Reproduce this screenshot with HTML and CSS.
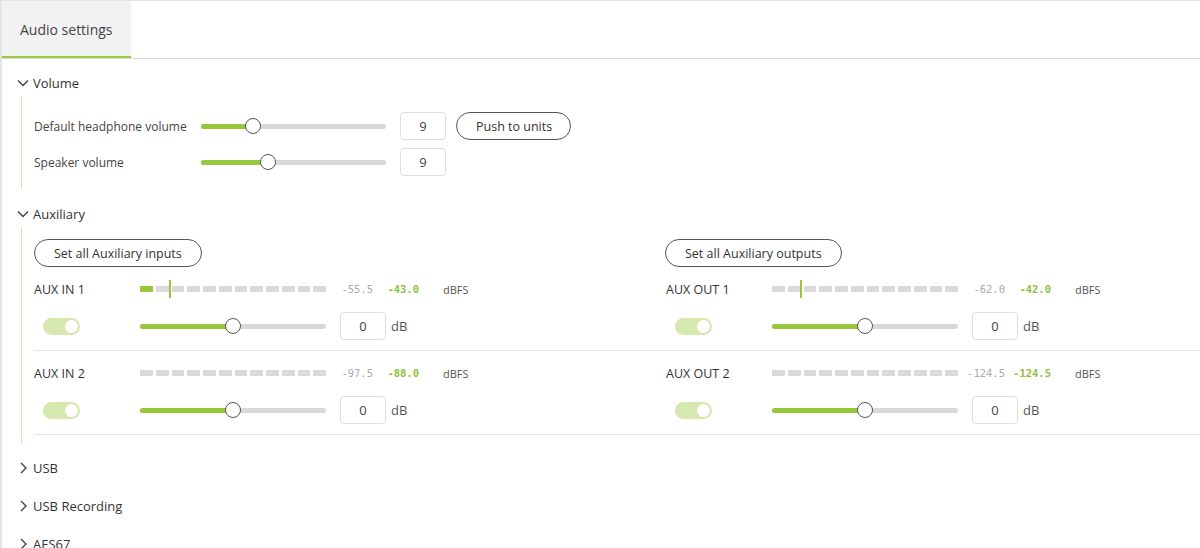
FILE: index.html
```html
<!DOCTYPE html>
<html lang="en">
<head>
    <meta charset="UTF-8">
    <meta name="viewport" content="width=device-width, initial-scale=1.0">
    <title>Audio settings</title>
    <link rel="stylesheet" href="styles.css">
</head>
<body>
<div class="page">
    <div class="tabs">
        <div class="tab active">Audio settings</div>
    </div>

    <div class="content">
        <!-- Volume -->
        <section class="section">
            <div class="section-head">
                <svg class="chev" width="12" height="12" viewBox="0 0 12 12"><path d="M1 3.5 L6 8.5 L11 3.5"/></svg>
                <span>Volume</span>
            </div>
            <div class="section-body vol-body">
                <div class="vol-row">
                    <span class="vol-label">Default headphone volume</span>
                    <div class="slider vol-slider">
                        <div class="fill" style="width:28%"></div>
                        <span class="knob" style="left:28%"></span>
                    </div>
                    <div class="num-box">9</div>
                    <button class="pill push-btn">Push to units</button>
                </div>
                <div class="vol-row">
                    <span class="vol-label">Speaker volume</span>
                    <div class="slider vol-slider">
                        <div class="fill" style="width:36%"></div>
                        <span class="knob" style="left:36%"></span>
                    </div>
                    <div class="num-box">9</div>
                </div>
            </div>
        </section>

        <!-- Auxiliary -->
        <section class="section">
            <div class="section-head">
                <svg class="chev" width="12" height="12" viewBox="0 0 12 12"><path d="M1 3.5 L6 8.5 L11 3.5"/></svg>
                <span>Auxiliary</span>
            </div>
            <div class="section-body aux-body">
                <div class="aux-grid">
                    <div class="btn-cell"><button class="pill">Set all Auxiliary inputs</button></div>
                    <div class="btn-cell"><button class="pill">Set all Auxiliary outputs</button></div>

                    <div class="aux-cell">
                        <div class="aux-top">
                            <span class="aux-name">AUX IN 1</span>
                            <div class="meter">
                                <span class="seg lit"></span><span class="seg"></span><span class="seg"></span><span class="seg"></span>
                                <span class="seg"></span><span class="seg"></span><span class="seg"></span><span class="seg"></span>
                                <span class="seg"></span><span class="seg"></span><span class="seg"></span><span class="seg"></span>
                                <span class="peak" style="left:29px"></span>
                            </div>
                            <span class="val rms">-55.5</span>
                            <span class="val pk">-43.0</span>
                            <span class="unit">dBFS</span>
                        </div>
                        <div class="aux-bottom">
                            <span class="toggle-wrap"><span class="toggle"></span></span>
                            <div class="slider aux-slider">
                                <div class="fill" style="width:50%"></div>
                                <span class="knob" style="left:50%"></span>
                            </div>
                            <div class="num-box">0</div>
                            <span class="db">dB</span>
                        </div>
                    </div>
                    <div class="aux-cell out">
                        <div class="aux-top">
                            <span class="aux-name">AUX OUT 1</span>
                            <div class="meter">
                                <span class="seg"></span><span class="seg"></span><span class="seg"></span><span class="seg"></span>
                                <span class="seg"></span><span class="seg"></span><span class="seg"></span><span class="seg"></span>
                                <span class="seg"></span><span class="seg"></span><span class="seg"></span><span class="seg"></span>
                                <span class="peak" style="left:28px"></span>
                            </div>
                            <span class="val rms">-62.0</span>
                            <span class="val pk">-42.0</span>
                            <span class="unit">dBFS</span>
                        </div>
                        <div class="aux-bottom">
                            <span class="toggle-wrap"><span class="toggle"></span></span>
                            <div class="slider aux-slider">
                                <div class="fill" style="width:50%"></div>
                                <span class="knob" style="left:50%"></span>
                            </div>
                            <div class="num-box">0</div>
                            <span class="db">dB</span>
                        </div>
                    </div>

                    <div class="aux-cell">
                        <div class="aux-top">
                            <span class="aux-name">AUX IN 2</span>
                            <div class="meter">
                                <span class="seg"></span><span class="seg"></span><span class="seg"></span><span class="seg"></span>
                                <span class="seg"></span><span class="seg"></span><span class="seg"></span><span class="seg"></span>
                                <span class="seg"></span><span class="seg"></span><span class="seg"></span><span class="seg"></span>
                            </div>
                            <span class="val rms">-97.5</span>
                            <span class="val pk">-88.0</span>
                            <span class="unit">dBFS</span>
                        </div>
                        <div class="aux-bottom">
                            <span class="toggle-wrap"><span class="toggle"></span></span>
                            <div class="slider aux-slider">
                                <div class="fill" style="width:50%"></div>
                                <span class="knob" style="left:50%"></span>
                            </div>
                            <div class="num-box">0</div>
                            <span class="db">dB</span>
                        </div>
                    </div>
                    <div class="aux-cell out">
                        <div class="aux-top">
                            <span class="aux-name">AUX OUT 2</span>
                            <div class="meter">
                                <span class="seg"></span><span class="seg"></span><span class="seg"></span><span class="seg"></span>
                                <span class="seg"></span><span class="seg"></span><span class="seg"></span><span class="seg"></span>
                                <span class="seg"></span><span class="seg"></span><span class="seg"></span><span class="seg"></span>
                            </div>
                            <span class="val rms">-124.5</span>
                            <span class="val pk">-124.5</span>
                            <span class="unit">dBFS</span>
                        </div>
                        <div class="aux-bottom">
                            <span class="toggle-wrap"><span class="toggle"></span></span>
                            <div class="slider aux-slider">
                                <div class="fill" style="width:50%"></div>
                                <span class="knob" style="left:50%"></span>
                            </div>
                            <div class="num-box">0</div>
                            <span class="db">dB</span>
                        </div>
                    </div>
                </div>
            </div>
        </section>

        <!-- collapsed sections -->
        <section class="section">
            <div class="section-head">
                <svg class="chev" width="12" height="12" viewBox="0 0 12 12"><path d="M4 1 L9 6 L4 11"/></svg>
                <span>USB</span>
            </div>
        </section>
        <section class="section">
            <div class="section-head">
                <svg class="chev" width="12" height="12" viewBox="0 0 12 12"><path d="M4 1 L9 6 L4 11"/></svg>
                <span>USB Recording</span>
            </div>
        </section>
        <section class="section">
            <div class="section-head">
                <svg class="chev" width="12" height="12" viewBox="0 0 12 12"><path d="M4 1 L9 6 L4 11"/></svg>
                <span>AES67</span>
            </div>
        </section>
    </div>
</div>
</body>
</html>
```

FILE: styles.css
```css
body {
    margin: 0;
    font-family: 'Open Sans', 'Noto Sans', sans-serif;
    color: #444;
    background-color: #fff;
}

.page {
    height: 548px;
    box-sizing: border-box;
    border-left: 2px solid #e4e4e4;
    border-top: 1px solid #e4e4e4;
    overflow: hidden;
}

/* tabs */
.tabs {
    display: flex;
    border-bottom: 1px solid #dcdcdc;
}

.tab {
    height: 55px;
    padding: 0 18px;
    display: flex;
    align-items: center;
    padding-top: 2px;
    box-sizing: border-box;
    font-size: 14px;
    color: #444;
}

.tab.active {
    height: 57px;
    background-color: #f2f2f2;
    border-bottom: 2px solid #9bc83f;
}

/* sections */
.content {
    padding-left: 15px;
}

.section {
    margin-top: 12px;
}

.section:first-child {
    margin-top: 11px;
}

.section-head {
    height: 26px;
    display: flex;
    align-items: center;
    gap: 4px;
    font-size: 13px;
    color: #333;
}

.chev {
    fill: none;
    stroke: #444;
    stroke-width: 1.4;
}

.section-body {
    margin-left: 4px;
    border-left: 1px solid #d5e7ae;
    padding-left: 12px;
}

.vol-body {
    padding-top: 12px;
    padding-bottom: 9px;
}

.aux-body {
    padding-top: 12px;
    padding-bottom: 8px;
}

/* volume rows */
.vol-row {
    height: 36px;
    display: flex;
    align-items: center;
    font-size: 12px;
}

.vol-label {
    width: 167px;
    flex-shrink: 0;
}

.vol-slider {
    width: 185px;
}

.vol-row .num-box {
    margin-left: 14px;
}

.push-btn {
    margin-left: 10px;
    width: 115px;
}

/* slider */
.slider {
    position: relative;
    height: 5px;
    border-radius: 3px;
    background-color: #d8d8d8;
    flex-shrink: 0;
}

.slider .fill {
    height: 100%;
    border-radius: 3px;
    background-color: #97c73b;
}

.slider .knob {
    position: absolute;
    top: 50%;
    width: 14px;
    height: 14px;
    margin: -8px 0 0 -8px;
    border: 1px solid #555;
    border-radius: 50%;
    background-color: #fff;
}

/* inputs and buttons */
.num-box {
    width: 46px;
    height: 28px;
    box-sizing: border-box;
    border: 1px solid #dedede;
    border-radius: 4px;
    display: flex;
    align-items: center;
    justify-content: center;
    font-size: 13px;
    color: #444;
    flex-shrink: 0;
}

.pill {
    height: 28px;
    padding: 0 19px;
    border: 1px solid #555;
    border-radius: 14px;
    background-color: #fff;
    font-family: 'Open Sans', 'Noto Sans', sans-serif;
    font-size: 12.5px;
    font-weight: 500;
    color: #333;
    white-space: nowrap;
}

/* auxiliary grid */
.aux-grid {
    display: grid;
    grid-template-columns: 631px 1fr;
}

.btn-cell {
    display: flex;
}

.aux-cell {
    padding-top: 10px;
    padding-bottom: 10px;
    border-bottom: 1px solid #e2e2e2;
}

.aux-cell.out {
    padding-left: 1px;
}

.aux-top {
    height: 24px;
    display: flex;
    align-items: center;
}

.aux-name {
    width: 106px;
    flex-shrink: 0;
    font-size: 12.5px;
    color: #333;
}

.meter {
    position: relative;
    width: 186px;
    height: 6px;
    display: flex;
    gap: 3px;
}

.seg {
    flex: 1;
    background-color: #dadada;
}

.seg.lit {
    background-color: #97c73b;
}

.peak {
    position: absolute;
    top: -6px;
    width: 2px;
    height: 18px;
    background-color: #97c73b;
}

.val {
    font-family: 'DejaVu Sans Mono', monospace;
    font-size: 10.5px;
    text-align: right;
}

.rms {
    width: 47px;
    color: #aaa;
}

.pk {
    width: 46px;
    color: #8dc23a;
    font-weight: bold;
}

.unit {
    margin-left: 24px;
    font-size: 11px;
    color: #555;
}

.aux-bottom {
    margin-top: 11px;
    height: 28px;
    display: flex;
    align-items: center;
}

.toggle-wrap {
    width: 106px;
    padding-left: 9px;
    box-sizing: border-box;
    flex-shrink: 0;
    display: flex;
}

.toggle {
    width: 37px;
    height: 17px;
    border-radius: 9px;
    background-color: #d4e8b0;
    display: flex;
    justify-content: flex-end;
    align-items: center;
    padding-right: 2px;
    box-sizing: border-box;
}

.toggle::after {
    content: "";
    width: 13px;
    height: 13px;
    border-radius: 50%;
    background-color: #fff;
}

.aux-slider {
    width: 186px;
}

.aux-bottom .num-box {
    margin-left: 14px;
}

.db {
    margin-left: 5px;
    font-size: 13px;
    color: #555;
}
```
